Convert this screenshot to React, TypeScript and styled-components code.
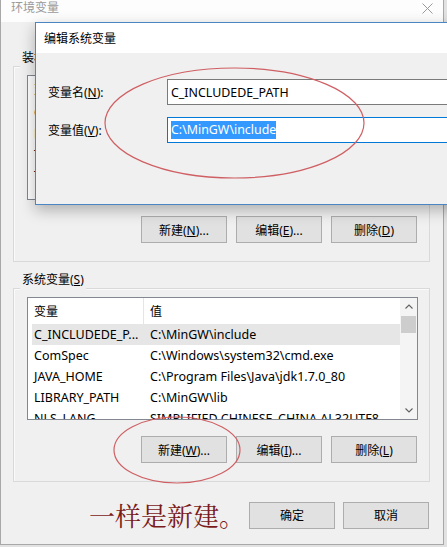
import React from 'react';
import styled, { createGlobalStyle } from 'styled-components';

const GlobalStyle = createGlobalStyle`
  html, body {
    margin: 0;
    padding: 0;
    overflow: hidden;
    background: #e2e2e2;
  }
  body {
    font-family: 'Segoe UI', 'Noto Sans', 'Noto Sans CJK SC', sans-serif;
    font-size: 12px;
    color: #000;
  }
`;

type Row = { name: string; value: string };

const userVars: Row[] = [
  { name: 'OneDrive', value: 'C:\\Users\\Administrator\\OneDrive' },
  { name: 'Path', value: 'C:\\Users\\Administrator\\AppData' },
  { name: 'TEMP', value: 'C:\\Users\\Administrator\\Temp' },
  { name: 'TMP', value: 'C:\\Users\\Administrator\\Temp' },
];

const systemVars: Row[] = [
  { name: 'C_INCLUDEDE_P...', value: 'C:\\MinGW\\include' },
  { name: 'ComSpec', value: 'C:\\Windows\\system32\\cmd.exe' },
  { name: 'JAVA_HOME', value: 'C:\\Program Files\\Java\\jdk1.7.0_80' },
  { name: 'LIBRARY_PATH', value: 'C:\\MinGW\\lib' },
  { name: 'NLS_LANG', value: 'SIMPLIFIED CHINESE_CHINA.AL32UTF8' },
];

function Chevron({ up }: { up?: boolean }) {
  return (
    <svg width="8" height="5" viewBox="0 0 8 5">
      <polyline
        points={up ? '0.5,4.5 4,1 7.5,4.5' : '0.5,0.5 4,4 7.5,0.5'}
        fill="none"
        stroke="#606060"
        strokeWidth="1.1"
      />
    </svg>
  );
}

function VarList({ rows, height, selected }: { rows: Row[]; height: number; selected?: number }) {
  return (
    <ListBox $height={height}>
      <ListMain>
        <HeaderRow>
          <HeaderCell>变量</HeaderCell>
          <HeaderCell $divider>值</HeaderCell>
        </HeaderRow>
        {rows.map((r, i) => (
          <ItemRow key={r.name} $selected={i === selected}>
            <NameCell>{r.name}</NameCell>
            <ValueCell>{r.value}</ValueCell>
          </ItemRow>
        ))}
      </ListMain>
      <ScrollBar>
        <ScrollArrow>
          <Chevron up />
        </ScrollArrow>
        <ScrollTrack>
          <Thumb />
        </ScrollTrack>
        <ScrollArrow>
          <Chevron />
        </ScrollArrow>
      </ScrollBar>
    </ListBox>
  );
}

export default function App() {
  return (
    <Desktop>
      <GlobalStyle />
      <Window>
        <TitleBar>
          <WindowTitle>环境变量</WindowTitle>
          <svg width="11" height="11" viewBox="0 0 11 11">
            <path d="M0.5 0.5 L10.5 10.5 M10.5 0.5 L0.5 10.5" stroke="#9a9a9a" strokeWidth="1" />
          </svg>
        </TitleBar>
        <Content>
          <GroupBox $top={44}>
            <GroupLabel>装机员 的用户变量(<u>U</u>)</GroupLabel>
            <VarList rows={userVars} height={125} />
            <ButtonRow>
              <Button>新建(<u>N</u>)...</Button>
              <Button>编辑(<u>E</u>)...</Button>
              <Button>删除(<u>D</u>)</Button>
            </ButtonRow>
          </GroupBox>
          <GroupBox $top={26}>
            <GroupLabel>系统变量(<u>S</u>)</GroupLabel>
            <VarList rows={systemVars} height={123} selected={0} />
            <ButtonRow>
              <Button>新建(<u>W</u>)...</Button>
              <Button>编辑(<u>I</u>)...</Button>
              <Button>删除(<u>L</u>)</Button>
            </ButtonRow>
          </GroupBox>
          <Footer>
            <Note>一样是新建。</Note>
            <Button>确定</Button>
            <Button>取消</Button>
          </Footer>
        </Content>
      </Window>

      <Dialog>
        <DialogTitle>编辑系统变量</DialogTitle>
        <DialogBody>
          <FieldRow>
            <FieldLabel>变量名(<u>N</u>):</FieldLabel>
            <Field>C_INCLUDEDE_PATH</Field>
          </FieldRow>
          <FieldRow>
            <FieldLabel>变量值(<u>V</u>):</FieldLabel>
            <Field $focused>
              <Selection>C:\MinGW\include</Selection>
            </Field>
          </FieldRow>
        </DialogBody>
      </Dialog>

      <Marks viewBox="0 0 447 547">
        <ellipse cx="234.5" cy="123" rx="129.5" ry="55" />
        <ellipse cx="177" cy="450" rx="63" ry="33" />
      </Marks>
    </Desktop>
  );
}

const Desktop = styled.div`
  position: relative;
  width: 447px;
  height: 547px;
  overflow: hidden;
`;

const Window = styled.div`
  width: 442px;
  height: 544px;
  border: 1px solid #a8a8a8;
  border-top: none;
  background: #f0f0f0;
  display: flex;
  flex-direction: column;
`;

const TitleBar = styled.div`
  height: 22px;
  flex: none;
  background: #fdfdfd;
  display: flex;
  justify-content: space-between;
  align-items: flex-start;
  padding: 0 10px 0 10px;

  svg {
    margin-top: 3px;
  }
`;

const WindowTitle = styled.span`
  line-height: 16px;
  color: #9a9a9a;
`;

const Content = styled.div`
  flex: 1;
  display: flex;
  flex-direction: column;
  padding: 0 13px 0 12px;
`;

const GroupBox = styled.div<{ $top: number }>`
  margin-top: ${(p) => p.$top}px;
  border: 1px solid #d9d9d9;
  box-shadow: inset 1px 1px 0 #fafafa;
  padding: 0 11px 18px 13px;
`;

const GroupLabel = styled.div`
  width: fit-content;
  margin: -17px 0 0 -7px;
  padding: 0 2px 2px;
  line-height: 16px;
  background: #f0f0f0;
  color: #000;
`;

const ListBox = styled.div<{ $height: number }>`
  box-sizing: border-box;
  height: ${(p) => p.$height}px;
  margin-top: 7px;
  border: 1px solid #828790;
  background: #fff;
  display: flex;
  overflow: hidden;
`;

const ListMain = styled.div`
  flex: 1;
  min-width: 0;
  display: flex;
  flex-direction: column;
  font-size: 12.5px;
`;

const HeaderRow = styled.div`
  height: 26px;
  flex: none;
  display: grid;
  grid-template-columns: 115px 1fr;
  align-items: stretch;
  font-size: 12px;
`;

const HeaderCell = styled.div<{ $divider?: boolean }>`
  display: flex;
  align-items: center;
  padding-left: 6px;
  border-left: ${(p) => (p.$divider ? '1px solid #e5e5e5' : 'none')};
  color: #000;
`;

const ItemRow = styled.div<{ $selected?: boolean }>`
  height: 21px;
  flex: none;
  margin-left: 4px;
  display: grid;
  grid-template-columns: 112px 1fr;
  align-items: center;
  background: ${(p) => (p.$selected ? '#e6e6e6' : 'transparent')};
  white-space: nowrap;
`;

const NameCell = styled.span`
  padding-left: 2px;
  overflow: hidden;
`;

const ValueCell = styled.span`
  padding-left: 6px;
  overflow: hidden;
`;

const ScrollBar = styled.div`
  width: 17px;
  flex: none;
  display: flex;
  flex-direction: column;
  background: #f4f4f4;
`;

const ScrollArrow = styled.div`
  height: 17px;
  flex: none;
  display: flex;
  align-items: center;
  justify-content: center;
`;

const ScrollTrack = styled.div`
  flex: 1;
  padding: 1px 1px 0;
`;

const Thumb = styled.div`
  height: 17px;
  background: #cdcdcd;
`;

const ButtonRow = styled.div`
  margin-top: 16px;
  display: flex;
  justify-content: flex-end;
  gap: 9px;
  padding-right: 1px;
`;

const Button = styled.button`
  box-sizing: border-box;
  width: 86px;
  height: 27px;
  padding: 0;
  border: 1px solid #adadad;
  background: #e1e1e1;
  font-family: inherit;
  font-size: 12px;
  color: #000;
`;

const Footer = styled.div`
  margin-top: 18px;
  display: flex;
  justify-content: flex-end;
  align-items: center;
  gap: 8px;
  padding-right: 1px;
`;

const Note = styled.span`
  font-family: 'Noto Serif CJK SC', 'Noto Sans CJK SC', serif;
  font-size: 26px;
  line-height: 30px;
  color: #7a1a1a;
  margin-right: -4px;
`;

const Dialog = styled.div`
  position: absolute;
  left: 35px;
  top: 22px;
  width: 440px;
  height: 183px;
  box-sizing: border-box;
  border: 1px solid #4b86c2;
  background: #f0f0f0;
  box-shadow: 0 5px 14px rgba(0, 0, 0, 0.28);
  display: flex;
  flex-direction: column;
`;

const DialogTitle = styled.div`
  height: 30px;
  flex: none;
  background: #fff;
  display: flex;
  align-items: center;
  padding-left: 8px;
`;

const DialogBody = styled.div`
  flex: 1;
  display: flex;
  flex-direction: column;
  gap: 12px;
  padding: 26px 0 0 12px;
`;

const FieldRow = styled.div`
  display: flex;
  align-items: center;
`;

const FieldLabel = styled.span`
  width: 119px;
  flex: none;
`;

const Field = styled.div<{ $focused?: boolean }>`
  flex: 1;
  box-sizing: border-box;
  height: 26px;
  border: 1px solid ${(p) => (p.$focused ? '#0078d7' : '#7a7a7a')};
  background: #fff;
  display: flex;
  align-items: center;
  padding-left: 3px;
  font-size: 12.4px;
  white-space: nowrap;
`;

const Selection = styled.span`
  background: #3399ff;
  color: #fff;
  line-height: 18px;
`;

const Marks = styled.svg`
  position: absolute;
  left: 0;
  top: 0;
  width: 447px;
  height: 547px;
  pointer-events: none;

  ellipse {
    fill: none;
    stroke: #cf5f63;
    stroke-width: 1.2;
  }
`;
